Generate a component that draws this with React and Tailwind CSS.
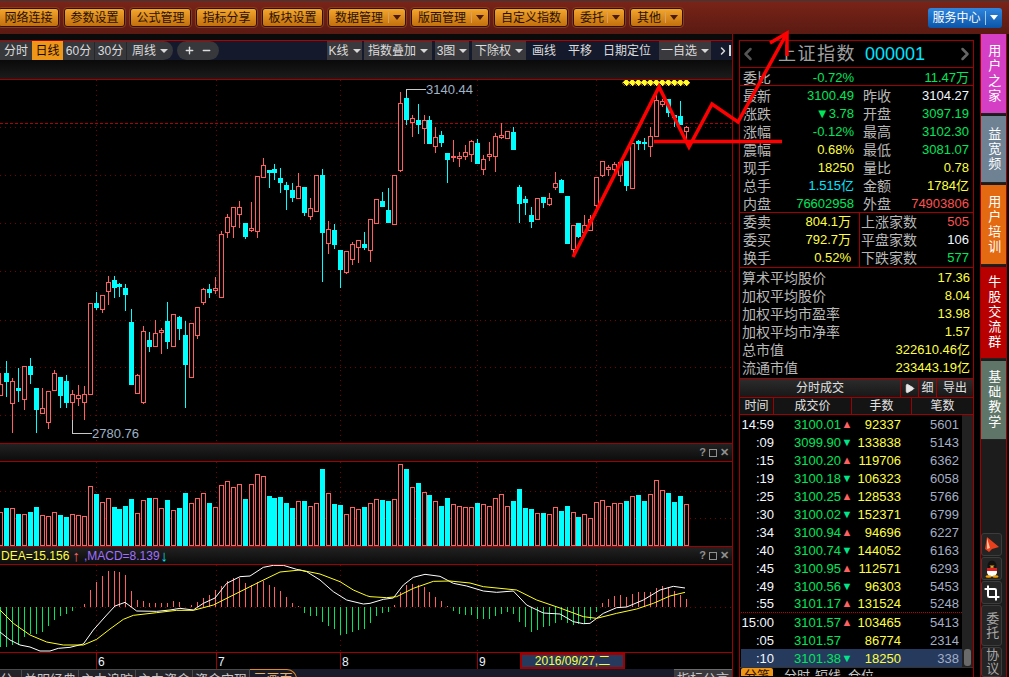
import React from 'react';
import { Crop, Play, ChevronLeft, ChevronRight, Plus, Minus } from 'lucide-react';

const RED = '#ff5f5f';
const CYAN = '#00ffff';

// candles read off the chart: [x, wick top, wick bottom, body top, body bottom, colour]
const candlesA = [
  [1, 370, 438, 403, 435, 'r'], [19, 333, 440, 370, 392, 'c'], [37, 385, 548, 394, 460, 'r'], [55, 354, 456, 414, 419, 'c'],
  [73, 349, 480, 349, 448, 'r'], [91, 324, 402, 349, 371, 'c'], [109, 414, 548, 414, 476, 'c'], [127, 414, 492, 475, 490, 'r'],
  [145, 424, 537, 424, 517, 'r'], [163, 360, 422, 370, 421, 'r'], [181, 381, 474, 381, 434, 'c'], [199, 375, 474, 393, 455, 'c'],
  [217, 420, 550, 433, 457, 'r'], [235, 405, 468, 436, 445, 'r'], [253, 408, 510, 433, 455, 'r'], [271, 160, 431, 160, 431, 'r'],
  [289, 126, 180, 160, 171, 'c'], [307, 135, 188, 136, 176, 'r'], [325, 79, 165, 97, 124, 'r'], [343, 79, 144, 90, 110, 'c'],
  [358, 98, 140, 102, 107, 'c'], [376, 102, 183, 114, 132, 'c'], [394, 177, 402, 216, 402, 'c'], [412, 373, 431, 376, 428, 'r'],
  [430, 229, 461, 244, 455, 'r'], [448, 246, 306, 270, 288, 'c'], [466, 210, 288, 250, 287, 'r'], [484, 235, 312, 240, 245, 'r'],
  [502, 156, 297, 213, 273, 'c'], [520, 192, 292, 193, 287, 'r'], [538, 198, 270, 201, 234, 'c'], [556, 213, 474, 255, 342, 'c'],
  [574, 220, 380, 220, 380, 'r'], [592, 172, 267, 172, 254, 'r'], [610, 114, 165, 117, 155, 'r'], [628, 102, 144, 117, 126, 'c'],
  [646, 81, 132, 114, 119, 'r'], [664, -57, 144, -49, 140, 'r'],
].map(([x, a, b, c, d, k]) => [x / 3, a / 3 + 250, b / 3 + 250, c / 3 + 250, d / 3 + 250, k]);

const candlesB = [
  [82, 418, 489, 427, 470, 'r'], [100, 397, 489, 397, 452, 'r'], [118, 378, 459, 397, 418, 'r'], [136, 444, 491, 444, 483, 'c'],
  [154, 381, 470, 460, 465, 'r'], [172, 304, 489, 304, 467, 'r'], [190, 250, 305, 271, 305, 'r'], [208, 285, 339, 285, 290, 'c'],
  [223, 267, 315, 282, 290, 'c'], [241, 279, 354, 309, 321, 'c'], [259, 321, 405, 330, 342, 'c'], [277, 324, 381, 345, 366, 'c'],
  [295, 294, 369, 334, 369, 'r'], [313, 336, 423, 336, 411, 'c'], [331, 369, 435, 400, 422, 'r'], [349, 300, 408, 301, 407, 'r'],
  [367, 282, 621, 300, 471, 'c'], [385, 438, 537, 463, 503, 'r'], [403, 447, 522, 465, 507, 'c'], [421, 525, 639, 525, 582, 'c'],
  [439, 529, 597, 529, 590, 'r'], [457, 502, 570, 508, 551, 'r'], [475, 496, 564, 496, 515, 'r'], [493, 471, 525, 507, 516, 'c'],
  [511, 433, 561, 433, 524, 'r'], [529, 373, 446, 373, 443, 'r'], [547, 351, 396, 378, 393, 'c'], [565, 339, 441, 405, 441, 'c'],
  [583, 301, 446, 301, 446, 'r'], [601, 52, 290, 85, 285, 'r'], [619, 43, 150, 69, 132, 'c'], [637, 121, 186, 130, 140, 'r'],
  [655, 87, 177, 135, 147, 'c'], [673, 121, 207, 136, 158, 'r'], [688, 123, 204, 135, 204, 'c'], [706, 156, 234, 187, 212, 'r'],
  [724, 168, 216, 180, 201, 'c'], [742, 234, 324, 234, 252, 'c'], [760, 195, 261, 243, 246, 'r'], [778, 231, 276, 244, 250, 'r'],
  [796, 210, 255, 232, 242, 'r'],
].map(([x, a, b, c, d, k]) => [x / 3 + 200, a / 3 + 75, b / 3 + 75, c / 3 + 75, d / 3 + 75, k]);

const candlesC = [
  [4, 195, 261, 199, 236, 'r'], [22, 192, 264, 204, 264, 'c'], [40, 240, 300, 252, 282, 'r'], [58, 201, 258, 237, 243, 'r'],
  [76, 175, 291, 184, 243, 'r'], [94, 144, 192, 180, 185, 'r'], [112, 168, 190, 169, 188, 'r'], [130, 156, 222, 171, 222, 'c'],
  [148, 331, 444, 336, 384, 'c'], [166, 363, 420, 372, 381, 'c'], [184, 396, 459, 420, 438, 'c'], [202, 369, 432, 370, 431, 'r'],
  [220, 366, 399, 366, 381, 'c'], [238, 354, 393, 370, 386, 'r'], [256, 291, 345, 324, 336, 'r'], [274, 312, 351, 316, 351, 'c'],
  [292, 363, 504, 363, 504, 'c'], [310, 450, 540, 451, 522, 'r'], [325, 444, 489, 444, 483, 'c'], [343, 420, 471, 451, 471, 'r'],
  [361, 420, 465, 433, 465, 'r'], [379, 307, 402, 307, 390, 'r'], [397, 258, 306, 259, 300, 'r'], [415, 270, 303, 276, 281, 'r'],
  [433, 261, 294, 268, 282, 'r'], [451, 261, 321, 262, 300, 'r'], [469, 258, 348, 258, 330, 'c'], [487, 205, 339, 205, 339, 'r'],
  [505, 195, 225, 198, 204, 'c'], [523, 190, 225, 201, 204, 'c'], [541, 156, 246, 184, 212, 'r'], [559, 54, 183, 75, 183, 'r'],
  [577, 72, 96, 78, 88, 'r'], [595, 72, 126, 72, 111, 'c'], [613, 121, 156, 121, 126, 'c'], [631, 78, 148, 123, 148, 'c'],
  [649, 153, 198, 157, 167, 'r'],
].map(([x, a, b, c, d, k]) => [x / 3 + 470, a / 3 + 75, b / 3 + 75, c / 3 + 75, d / 3 + 75, k]);

const candles = [...candlesA, ...candlesB, ...candlesC];

// volume bars: [x, top, colour]
const volLeft = '0r216 19c204 37r204 55c222 73r222 91c216 109c201 127r225 145r229 163r216 181c225 199c231 217r222 235r225 253r229 271r139 289c162 307r187 325r175 343c201 358c207 376c198 394c177 412r220 430r181 448c174 466r175 484r204 502c180 520r210 538c204 556c159 574r190 592r175 610r160 628c189 646r202 664r136 682r124 700r142 718r133 736c177 754r133 772r103 790r109 808c168 823c174 841c171 859c189 877c204 895r184 913c183 931r199 949r190 967c87 985r160 1003c192 1021c195 1039r222 1057r202 1075r208 1093c201';
const volRight = '1r190 19r178 37c180 55c183 73r178 91r73 109c87 127r142 145c129 163r157 178c165 196r184 214c198 232c174 250r193 268r199 286r202 304r202 322c189 340r193 358r199 376r175 394r163 412r199 430c183 448c147 466c204 484c207 502r220 520c219 538r223 556r202 574c213 592c198 610r217 625c231 643r223 661r235 679r187 697r181 715r199 733r190 751r190 769c183 787r169 805c165 823c183 841r163 859r121 877r151 895c159 913c186 931c168 949r193';

const parseBars = (str, off) =>
  str.split(' ').map((s) => {
    const m = s.match(/(\d+)([rcg])(\d+)/);
    return { x: Math.round(Number(m[1]) / 3 + off), kind: m[2], v: Number(m[3]) / 3 + 440 };
  });

const volumes = [...parseBars(volLeft, 0), ...parseBars(volRight, 370)];

const macdLeft = '1g620 19g622 37g615 55g615 73g590 91g582 109g582 127g576 145g558 163g540 181g528 199g522 217g513 253r492 271r450 289r426 307r408 325r393 343r393 358r396 376r405 394r453 412r480 430r483 448r489 466r489 484r489 502r490 520r483 538r486 574r495 592r486 610r474 628r465 646r450 664r438 682r424 700r414 718r413 736r429 754r435 772r426 790r423 808r435 823r441 841r453 859r471 877r489 895r497 913g519 931g529 949g528 967g546 985g558 1003g567 1021g585 1039g583 1057g576 1075g570 1093g567';
const macdRight = '1g549 19g528 37g519 55g516 73r495 91r456 109r436 127r432 145r435 163r441 178r456 196r471 214r483 232r498 250g513 268g522 286g525 304g525 322g537 340g537 358g537 376g528 394g522 412g516 430g522 448g546 466g561 484g576 502g571 520g561 538g558 556g549 574g540 592g549 610g555 625g552 643g552 661g540 679g516 697r489 715r477 733r468 751r465 769r471 787r462 805r456 823r456 841r456 859r444 877r438 895r441 913r453 931r465 949r477';
const macd = [...parseBars(macdLeft, 0), ...parseBars(macdRight, 370)];

const toPts = (pts, off) => pts.map(([x, y]) => `${x / 3 + off},${y / 3 + 440}`).join(' ');
const whiteLine =
  toPts([[0, 576], [30, 600], [60, 615], [90, 621], [120, 633], [150, 633], [175, 625], [210, 622], [250, 612], [280, 570], [320, 525], [345, 498], [375, 487], [410, 513], [470, 514], [510, 510], [540, 505], [580, 510], [610, 490], [645, 474], [680, 430], [720, 410], [750, 408], [790, 382], [820, 376], [850, 376], [890, 388], [920, 395], [960, 420], [1000, 455], [1040, 480], [1090, 492]], 0) +
  ' ' +
  toPts([[0, 490], [40, 478], [70, 474], [100, 435], [130, 412], [165, 403], [210, 409], [250, 430], [290, 438], [340, 453], [380, 457], [430, 453], [470, 495], [520, 519], [570, 522], [610, 545], [640, 551], [660, 550], [700, 520], [740, 503], [770, 501], [820, 480], [870, 450], [910, 439], [945, 444]], 370);
const yellowLine =
  toPts([[0, 510], [40, 550], [90, 585], [140, 606], [190, 615], [250, 615], [290, 598], [330, 567], [370, 538], [400, 526], [470, 518], [530, 511], [580, 511], [640, 495], [700, 465], [780, 425], [840, 396], [900, 390], [960, 402], [1020, 425], [1060, 450], [1100, 467]], 0) +
  ' ' +
  toPts([[0, 470], [50, 473], [80, 470], [130, 445], [190, 424], [240, 423], [300, 429], [340, 440], [440, 450], [500, 480], [570, 504], [640, 530], [680, 535], [740, 520], [800, 507], [850, 490], [900, 468], [945, 457]], 370);

const vGrid = [96, 216, 340, 477, 596];

function GridV({ y1, y2 }) {
  return vGrid.map((x) => (
    <line key={x} x1={x + 0.5} x2={x + 0.5} y1={y1} y2={y2} stroke="#7a0000" strokeDasharray="1 4" />
  ));
}

function GridH({ ys, x2 = 732 }) {
  return ys.map((y) => (
    <line key={y} x1={0} x2={x2} y1={y + 0.5} y2={y + 0.5} stroke="#7a0000" strokeDasharray="1 4" />
  ));
}

function KChart() {
  return (
    <svg width="732" height="363" viewBox="0 80 732 363" className="block" shapeRendering="crispEdges">
      <GridV y1={80} y2={443} />
      <GridH ys={[127, 175, 223, 271, 320, 367, 415]} />
      <line x1="0" x2="732" y1="123.5" y2="123.5" stroke="#b00000" strokeDasharray="3 2" />
      {candles.map(([x, wt, wb, bt, bb, k], i) => {
        const cx = Math.round(x);
        const col = k === 'r' ? RED : CYAN;
        const top = Math.round(bt);
        const h = Math.max(Math.round(bb) - top, 1);
        return (
          <g key={i}>
            <line x1={cx + 0.5} x2={cx + 0.5} y1={wt} y2={wb} stroke={col} />
            {k === 'r' ? (
              <rect x={cx - 1.5} y={top + 0.5} width={4} height={h} fill="#000" stroke={col} />
            ) : (
              <rect x={cx - 2} y={top} width={5} height={h + 1} fill={col} />
            )}
          </g>
        );
      })}
      <path d="M406.5 96V89.5H426" fill="none" stroke="#c8c8c8" />
      <text x="426" y="94" fontSize="13" fill="#9fb2c6" fontFamily="Liberation Sans" shapeRendering="auto">3140.44</text>
      <path d="M72.5 420V433.5H92" fill="none" stroke="#c8c8c8" />
      <text x="92" y="438" fontSize="13" fill="#9fb2c6" fontFamily="Liberation Sans">2780.76</text>
      {Array.from({ length: 11 }).map((_, i) => (
        <polygon key={i} points={`${626 + i * 6},79 ${629.5 + i * 6},82.5 ${626 + i * 6},86 ${622.5 + i * 6},82.5`} fill="#ffff30" stroke="#ffa000" strokeWidth="0.5" />
      ))}
    </svg>
  );
}

function VolChart() {
  return (
    <svg width="732" height="84" viewBox="0 462 732 84" className="block" shapeRendering="crispEdges">
      <GridV y1={462} y2={546} />
      <GridH ys={[491, 518]} />
      {volumes.map((b, i) =>
        b.kind === 'r' ? (
          <rect key={i} x={b.x - 1.5} y={Math.round(b.v) + 0.5} width={4} height={545 - Math.round(b.v)} fill="#000" stroke={RED} />
        ) : (
          <rect key={i} x={b.x - 2} y={Math.round(b.v)} width={5} height={546 - Math.round(b.v)} fill={CYAN} />
        )
      )}
    </svg>
  );
}

function MacdChart() {
  return (
    <svg width="732" height="87" viewBox="0 565 732 87" className="block">
      <g shapeRendering="crispEdges">
        <GridV y1={565} y2={652} />
        <GridH ys={[607]} />
        {macd.map((b, i) => (
          <line key={i} x1={b.x + 0.5} x2={b.x + 0.5} y1={607} y2={b.v} stroke={b.kind === 'r' ? RED : '#00e65c'} />
        ))}
      </g>
      <polyline points={whiteLine} fill="none" stroke="#ffffff" strokeWidth="1" />
      <polyline points={yellowLine} fill="none" stroke="#ffff20" strokeWidth="1" />
    </svg>
  );
}

function TopBtn({ label, w, arrow }) {
  return (
    <div className={`flex items-center justify-center h-[19px] shrink-0 rounded-[3px] border border-[#2e1206] outline outline-1 outline-[#8a3a22] bg-gradient-to-b from-[#f4a62c] to-[#c2700c] text-[12px] text-[#2a1000] ${w}`}>
      <span className={arrow ? 'ml-[6px] flex-1' : ''}>{label}</span>
      {arrow && (
        <>
          <span className="w-px h-[11px] bg-[#d9a060]" />
          <span className="mx-[4px] w-0 h-0 border-x-[4px] border-x-transparent border-t-[5px] border-t-[#4a1c08]" />
        </>
      )}
    </div>
  );
}

function Caret() {
  return <span className="ml-[4px] w-0 h-0 border-x-[4px] border-x-transparent border-t-[4px] border-t-[#d8d8d8]" />;
}

function ToolBox({ label, w, ml }) {
  return (
    <div className={`flex items-center justify-center h-[19px] shrink-0 bg-[#3a3a3e] text-[12px] text-[#dcdcdc] whitespace-nowrap ${w} ${ml}`}>
      {label}
      <Caret />
    </div>
  );
}

function WindowBtns() {
  return (
    <div className="flex items-center gap-[3px] pr-[3px] text-[#8f8f8f]">
      <span className="text-[11px] font-bold leading-none">?</span>
      <span className="w-[8px] h-[8px] border border-[#8f8f8f]" />
      <span className="text-[11px] font-bold leading-none">✕</span>
    </div>
  );
}

function Toolbar() {
  return (
    <div className="flex items-center h-[19px] bg-[#141a2c]">
      <div className="flex h-[19px] w-[173px] shrink-0 items-center rounded-r-[10px] bg-[#37383c] text-[12px] text-[#dcdcdc] overflow-hidden">
        <span className="w-[32px] text-center">分时</span>
        <span className="w-[31px] h-full flex items-center justify-center bg-[#ee9618] text-[#1a0a00]">日线</span>
        <span className="w-[32px] text-center border-r border-[#26272a]">60分</span>
        <span className="w-[32px] text-center border-r border-[#26272a]">30分</span>
        <span className="flex items-center ml-[5px]">周线<Caret /></span>
      </div>
      <div className="flex h-[19px] w-[42px] ml-[4px] shrink-0 items-center justify-around px-[4px] rounded-full bg-[#37383c] text-[#dcdcdc]">
        <Plus size={11} strokeWidth={3} />
        <Minus size={11} strokeWidth={3} />
      </div>
      <ToolBox label="K线" w="w-[35px]" ml="ml-[108px]" />
      <ToolBox label="指数叠加" w="w-[68px]" ml="ml-[2px]" />
      <ToolBox label="3图" w="w-[34px]" ml="ml-[3px]" />
      <ToolBox label="下除权" w="w-[54px]" ml="ml-[3px]" />
      <span className="ml-[6px] shrink-0 whitespace-nowrap text-[12px] text-[#dcdcdc]">画线</span>
      <span className="ml-[12px] shrink-0 whitespace-nowrap text-[12px] text-[#dcdcdc]">平移</span>
      <span className="ml-[11px] shrink-0 whitespace-nowrap text-[12px] text-[#dcdcdc]">日期定位</span>
      <ToolBox label="一自选" w="w-[52px]" ml="ml-[8px]" />
      <ChevronRight size={12} strokeWidth={3} className="ml-[6px] shrink-0 text-[#d8d8d8]" />
      <span className="h-[11px] w-[2px] shrink-0 bg-[#d8d8d8]" />
    </div>
  );
}

const bottomTabs = [
  ['分析', 'w-[22px] justify-end'],
  ['关明经典', 'w-[57px] justify-center'],
  ['主力追踪', 'w-[57px] justify-center'],
  ['主力资金', 'w-[57px] justify-center'],
  ['资金实现', 'w-[57px] justify-center'],
];

function LeftColumn() {
  return (
    <div className="w-[733px] shrink-0 border-r border-[#a00000]">
      <div className="h-[6px] bg-[#0a0a0a]" />
      <div className="border-t border-[#b00000]">
        <Toolbar />
      </div>
      <div className="h-[19px] bg-gradient-to-b from-[#0a0a0a] to-[#1c1c1c]" />
      <div className="border-t border-[#a00000]">
        <KChart />
      </div>
      <div className="flex h-[18px] items-center justify-end border-t border-[#a00000] bg-gradient-to-b from-[#222222] to-[#0c0c0c]">
        <WindowBtns />
      </div>
      <div className="border-t border-[#a00000]">
        <VolChart />
      </div>
      <div className="flex h-[18px] items-center justify-between border-t border-[#a00000] bg-gradient-to-b from-[#222222] to-[#0c0c0c] text-[12px]">
        <div className="flex items-center pl-[1px]">
          <span className="text-[#ffff40]">DEA=15.156</span>
          <span className="ml-[3px] text-[15px] leading-none text-[#ff6060]">↑</span>
          <span className="ml-[4px] text-[#a070ff]">,MACD=8.139</span>
          <span className="ml-[1px] text-[15px] leading-none text-[#00e0ff]">↓</span>
        </div>
        <WindowBtns />
      </div>
      <div className="border-t border-[#a00000]">
        <MacdChart />
      </div>
      <div className="flex h-[17px] border-t border-[#a00000] pl-[96px] text-[12px] text-[#e8f4ff]">
        <span className="w-[120px] border-l border-[#a00000] pl-[1px]">6</span>
        <span className="w-[124px] border-l border-[#a00000] pl-[1px]">7</span>
        <span className="w-[137px] border-l border-[#a00000] pl-[1px]">8</span>
        <span className="w-[43px] border-l border-[#a00000] pl-[1px]">9</span>
        <span className="flex w-[105px] items-center justify-center border-2 border-[#a00000] bg-[#263a5e] text-[#ffff40]">2016/09/27,二</span>
      </div>
      <div className="flex h-[8px] items-start overflow-hidden bg-[#181c2a] text-[13px] text-[#c8c8c8]">
        {bottomTabs.map(([t, w]) => (
          <span key={t} className={`flex h-[20px] pt-px border-r border-t border-[#4a4a4a] bg-[#23242a] leading-[18px] ${w}`}>{t}</span>
        ))}
        <span className="h-[20px] w-[47px] text-center rounded-tr-[10px] border-t border-r border-[#e08a20] leading-[18px] text-[#e8b060]">三画面</span>
        <span className="ml-auto h-[20px] w-[58px] text-center bg-[#3a3a3e] border-t border-[#6a6a6a] leading-[18px]">指标公言</span>
      </div>
    </div>
  );
}

const G = 'text-[#00e65c]';
const Y = 'text-[#ffff40]';
const W = 'text-[#f2f8ff]';

const quoteRows = [
  ['最新', '3100.49', G, '昨收', '3104.27', W],
  ['涨跌', '▼3.78', G, '开盘', '3097.19', G],
  ['涨幅', '-0.12%', G, '最高', '3102.30', G],
  ['震幅', '0.68%', Y, '最低', '3081.07', G],
  ['现手', '18250', Y, '量比', '0.78', Y],
  ['总手', '1.515亿', 'text-[#00e5ff]', '金额', '1784亿', Y],
  ['内盘', '76602958', G, '外盘', '74903806', 'text-[#ff5050]'],
];

const statRows = [
  ['算术平均股价', '17.36'],
  ['加权平均股价', '8.04'],
  ['加权平均市盈率', '13.98'],
  ['加权平均市净率', '1.57'],
  ['总市值', '322610.46亿'],
  ['流通市值', '233443.19亿'],
];

const ticks = [
  ['14:59', '3100.01', 'u', '92337', '5601'],
  [':09', '3099.90', 'd', '133838', '5143'],
  [':15', '3100.20', 'u', '119706', '6362'],
  [':19', '3100.18', 'd', '106323', '6058'],
  [':25', '3100.25', 'u', '128533', '5766'],
  [':30', '3100.02', 'd', '152371', '6799'],
  [':34', '3100.94', 'u', '94696', '6227'],
  [':40', '3100.74', 'd', '144052', '6163'],
  [':45', '3100.95', 'u', '112571', '6293'],
  [':49', '3100.56', 'd', '96303', '5453'],
  [':55', '3101.17', 'u', '131524', '5248'],
  ['15:00', '3101.57', 'u', '103465', '5413'],
  [':05', '3101.57', '', '86774', '2314'],
  [':10', '3101.38', 'd', '18250', '338'],
];

function Label({ children }) {
  return <span className="text-[14px] text-[#b8b8b8]">{children}</span>;
}

function TickRow({ row, index }) {
  const [time, price, dir, hands, count] = row;
  const last = index === ticks.length - 1;
  const rule = index === 10 ? 'border-b border-dotted border-[#c00000]' : '';
  return (
    <div className={`flex h-[18px] items-center text-[13px] leading-none ${last ? 'bg-[#263a5e]' : ''} ${rule}`}>
      <span className={`w-[33px] text-right ${W}`}>{time}</span>
      <span className={`w-[67px] text-right ${G}`}>{price}</span>
      <span className={`flex w-[12px] justify-center text-[11px] ${dir === 'u' ? 'text-[#ff6060]' : 'text-[#00e68a]'}`}>
        {dir === 'u' ? '▲' : dir === 'd' ? '▼' : ''}
      </span>
      <span className={`w-[48px] text-right ${Y}`}>{hands}</span>
      <span className="w-[58px] text-right text-[#a4aec4]">{count}</span>
    </div>
  );
}

function RightPanel() {
  return (
    <div className="ml-[6px] mt-[6px] h-[640px] w-[235px] shrink-0 border border-b-0 border-[#a00000] bg-black">
      <div className="flex h-[27px] items-center border-b border-[#a00000]">
        <ChevronLeft size={20} strokeWidth={3} className="ml-[-2px] text-[#555555]" />
        <span className="ml-[20px] text-[18px] tracking-[1.5px] text-[#a0a0a0] leading-none">上证指数</span>
        <span className="ml-[9px] text-[18px] text-[#00e5ff] leading-none">000001</span>
        <ChevronRight size={20} strokeWidth={3} className="ml-auto mr-[-2px] text-[#666666]" />
      </div>
      <div className="flex h-[18px] items-center border-b border-[#a00000] pl-[3px] pr-[4px] pt-[3px] text-[13px]">
        <span className="w-[28px]"><Label>委比</Label></span>
        <span className={`w-[83px] text-right whitespace-nowrap ${G}`}>-0.72%</span>
        <span className={`ml-auto ${G}`}>11.47万</span>
      </div>
      <div className="border-b border-[#a00000]">
        {quoteRows.map(([a, b, c, d, e, f]) => (
          <div key={a} className="flex h-[18px] items-center pl-[3px] pr-[4px] pt-[2px] text-[13px]">
            <span className="w-[28px]"><Label>{a}</Label></span>
            <span className={`w-[83px] text-right whitespace-nowrap ${c}`}>{b}</span>
            <span className="ml-[9px] w-[28px]"><Label>{d}</Label></span>
            <span className={`flex-1 text-right whitespace-nowrap ${f}`}>{e}</span>
          </div>
        ))}
      </div>
      <div className="flex h-[55px] border-b border-[#a00000] text-[13px]">
        <div className="w-[120px] border-r border-[#a00000] pl-[3px] pr-[8px]">
          {[['委卖', '804.1万'], ['委买', '792.7万'], ['换手', '0.52%']].map(([a, b]) => (
            <div key={a} className="flex h-[18px] items-center justify-between">
              <Label>{a}</Label>
              <span className={Y}>{b}</span>
            </div>
          ))}
        </div>
        <div className="flex-1 pl-px pr-[4px]">
          {[['上涨家数', '505', 'text-[#ff5050]'], ['平盘家数', '106', W], ['下跌家数', '577', G]].map(([a, b, c]) => (
            <div key={a} className="flex h-[18px] items-center justify-between">
              <Label>{a}</Label>
              <span className={c}>{b}</span>
            </div>
          ))}
        </div>
      </div>
      <div className="h-[110px] pl-[2px] pr-[3px] pt-px">
        {statRows.map(([a, b]) => (
          <div key={a} className="flex h-[18px] items-center justify-between text-[13px]">
            <Label>{a}</Label>
            <span className={Y}>{b}</span>
          </div>
        ))}
      </div>
      <div className="flex h-[20px] items-center border-y border-[#a00000] bg-gradient-to-b from-[#2c2c2c] to-[#181818] text-[12px] text-[#e0e0e0]">
        <span className="w-[160px] text-center">分时成交</span>
        <span className="flex h-full w-[18px] items-center justify-center border-l border-[#a00000]"><Play size={11} fill="#e8e8e8" stroke="#e8e8e8" /></span>
        <span className="flex h-full w-[18px] items-center justify-center border-l border-[#a00000]">细</span>
        <span className="flex h-full flex-1 items-center justify-center border-l border-[#a00000]">导出</span>
      </div>
      <div className="flex h-[17px] items-center border-b border-[#a00000] bg-[#141414] text-[12px] text-[#e0e0e0]">
        <span className="w-[33px] text-center">时间</span>
        <span className="flex h-full w-[78px] items-center justify-center border-l border-[#a00000]">成交价</span>
        <span className="flex h-full w-[60px] items-center justify-center border-l border-[#a00000]">手数</span>
        <span className="flex h-full flex-1 items-center justify-center border-l border-[#a00000]">笔数</span>
      </div>
      <div className="flex">
        <div className="w-[222px] pl-px">
          {ticks.map((r, i) => (
            <TickRow key={i} row={r} index={i} />
          ))}
        </div>
        <div className="flex w-[11px] flex-col items-center justify-end bg-[#222222] pb-px">
          <span className="h-[17px] w-[7px] rounded-[3px] bg-[#6a6a6a]" />
        </div>
      </div>
      <div className="flex h-[9px] items-start overflow-hidden border-t border-[#333333] text-[13px] text-[#c8c8c8]">
        <span className="ml-px h-[18px] w-[32px] rounded-t-[2px] bg-[#ee9618] text-center leading-[16px] text-[#2a1000]">分笔</span>
        <span className="ml-[11px] leading-[16px]">分时</span>
        <span className="ml-[5px] leading-[16px]">短线</span>
        <span className="ml-[7px] leading-[16px]">仓位</span>
      </div>
    </div>
  );
}

function SideTab({ label, color, h }) {
  return (
    <div className={`flex shrink-0 items-center justify-center ${color} ${h} mb-[2px] border-b border-[#222222] text-[13px] text-white`}>
      <span className="[writing-mode:vertical-rl] tracking-[2px]">{label}</span>
    </div>
  );
}

function IconBtn({ children, h = 'h-[23px]' }) {
  return (
    <div className={`flex ${h} w-[21px] shrink-0 items-center justify-center rounded-[3px] border border-[#3c3c3c] bg-[#242424] text-[13px] text-[#a8a8a8]`}>
      {children}
    </div>
  );
}

function Sidebar() {
  return (
    <div className="ml-[6px] flex h-[643px] w-[27px] shrink-0 flex-col border-x border-[#a00000] bg-[#1c1c1c]">
      <SideTab label="用户之家" color="bg-[#d53fc5]" h="h-[80px]" />
      <SideTab label="益宽频" color="bg-[#6e8294]" h="h-[67px]" />
      <SideTab label="用户培训" color="bg-[#e46a12]" h="h-[80px]" />
      <SideTab label="牛股交流群" color="bg-[#b80000]" h="h-[92px]" />
      <SideTab label="基础教学" color="bg-[#5e7567]" h="h-[79px]" />
      <div className="mt-[91px] flex flex-col gap-[1px]">
        <IconBtn>
          <svg width="17" height="17" viewBox="0 0 17 17">
            <path d="M4 1 L16 11 L9 13 L6 16 L2 13 Z" fill="#e8401c" />
            <path d="M4 2 L7 12 L4 13 Z" fill="#ffc0a0" />
          </svg>
        </IconBtn>
        <IconBtn>
          <svg width="16" height="18" viewBox="0 0 16 18">
            <ellipse cx="8" cy="6" rx="4.5" ry="5.5" fill="#111" />
            <ellipse cx="8" cy="12" rx="5" ry="4.5" fill="#fff" />
            <rect x="3" y="8" width="10" height="3" fill="#e02020" />
            <path d="M5.5 5.5 h5 L8 8 Z" fill="#f5a000" />
            <ellipse cx="4.5" cy="16.5" rx="3" ry="1.3" fill="#f5a000" />
            <ellipse cx="11.5" cy="16.5" rx="3" ry="1.3" fill="#f5a000" />
          </svg>
        </IconBtn>
        <IconBtn>
          <Crop size={16} strokeWidth={3} className="text-white" />
        </IconBtn>
        <IconBtn h="h-[41px]">
          <span className="[writing-mode:vertical-rl] tracking-[1px]">委托</span>
        </IconBtn>
        <IconBtn h="h-[30px]">
          <span className="[writing-mode:vertical-rl] tracking-[1px]">协议</span>
        </IconBtn>
      </div>
    </div>
  );
}

function Header() {
  return (
    <div className="flex h-[34px] items-center border-t border-[#3a3a3a] bg-gradient-to-b from-[#7a2418] to-[#5a1a12]">
      <div className="ml-[-2px] flex gap-[5px]">
        <TopBtn label="网络连接" w="w-[61px]" />
        <TopBtn label="参数设置" w="w-[61px]" />
        <TopBtn label="公式管理" w="w-[61px]" />
        <TopBtn label="指标分享" w="w-[61px]" />
        <TopBtn label="板块设置" w="w-[61px]" />
        <TopBtn label="数据管理" w="w-[78px]" arrow />
        <TopBtn label="版面管理" w="w-[78px]" arrow />
        <TopBtn label="自定义指数" w="w-[74px]" />
        <TopBtn label="委托" w="w-[52px]" arrow />
        <TopBtn label="其他" w="w-[53px]" arrow />
      </div>
      <div className="ml-auto mr-[7px] flex h-[20px] w-[74px] items-center rounded-[3px] bg-gradient-to-b from-[#2f86de] to-[#0a55a8] text-[12px] text-white">
        <span className="flex-1 text-center">服务中心</span>
        <span className="h-[14px] w-px bg-[#9cc8f0]" />
        <span className="mx-[4px] h-0 w-0 border-x-[4px] border-t-[5px] border-x-transparent border-t-white" />
      </div>
    </div>
  );
}

// red lines somebody drew by hand over the screenshot
function Scribble() {
  return (
    <svg className="absolute inset-0 pointer-events-none" width="1009" height="677" viewBox="0 0 1009 677">
      <g fill="none" stroke="#ff0000" strokeWidth="3.5" strokeLinejoin="miter">
        <polyline points="573,257 659,87 689,147 712,104 738,122 787,33" />
        <polyline points="770,43 787,33 787,56" />
        <line x1="654" y1="141.5" x2="782" y2="141.5" />
      </g>
    </svg>
  );
}

export default function App() {
  return (
    <div className="relative h-[677px] w-[1009px] overflow-hidden bg-black font-['Liberation_Sans','Noto_Sans_CJK_SC',sans-serif]">
      <Header />
      <div className="flex">
        <LeftColumn />
        <RightPanel />
        <Sidebar />
      </div>
      <Scribble />
    </div>
  );
}
